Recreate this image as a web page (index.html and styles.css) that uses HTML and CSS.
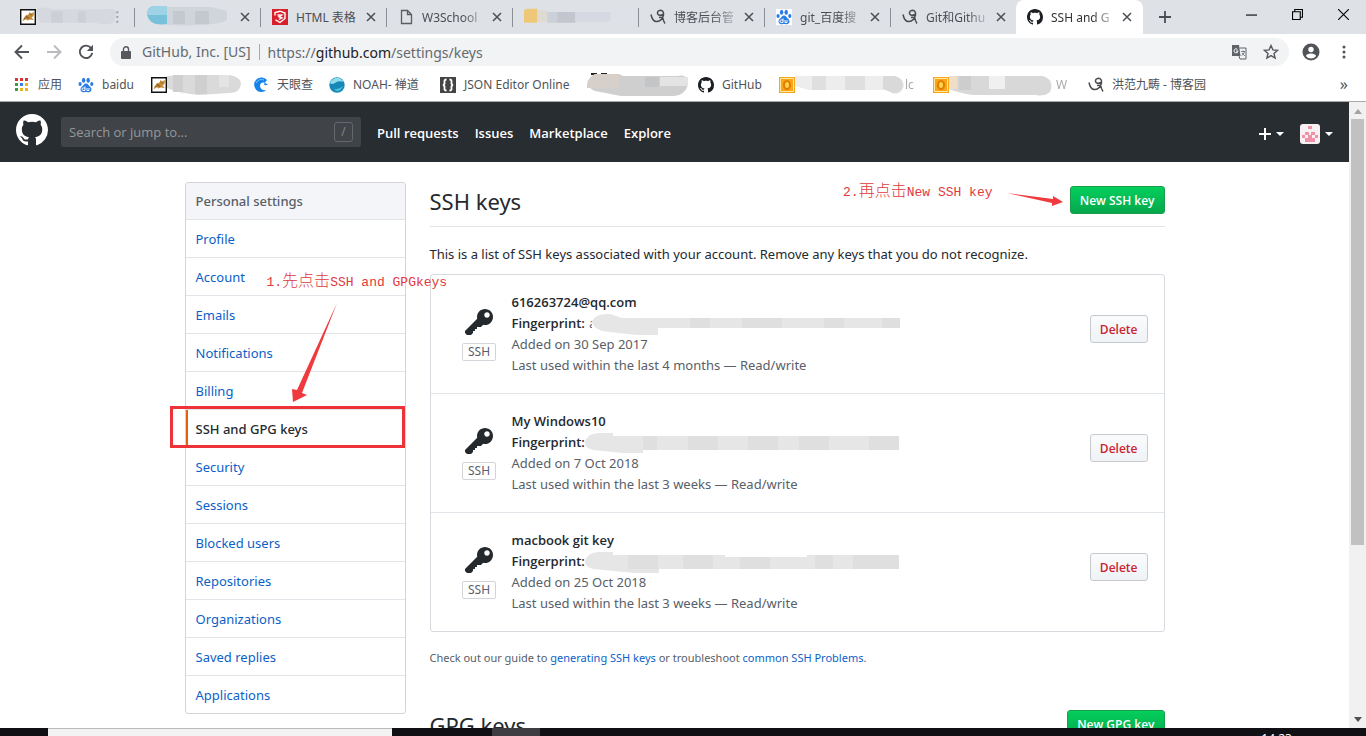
FILE: index.html
```html
<!DOCTYPE html>
<html lang="en">
<head>
<meta charset="utf-8">
<title>SSH and GPG keys</title>
<link rel="stylesheet" href="styles.css">
</head>
<body>
<svg class="sprite" aria-hidden="true">
  <symbol id="octocat" viewBox="0 0 16 16"><path fill="currentColor" d="M8 0C3.58 0 0 3.58 0 8c0 3.54 2.29 6.53 5.47 7.59.4.07.55-.17.55-.38 0-.19-.01-.82-.01-1.49-2.01.37-2.53-.49-2.69-.94-.09-.23-.48-.94-.82-1.13-.28-.15-.68-.52-.01-.53.63-.01 1.08.58 1.23.82.72 1.21 1.87.87 2.33.66.07-.52.28-.87.51-1.07-1.78-.2-3.64-.89-3.64-3.95 0-.87.31-1.59.82-2.15-.08-.2-.36-1.02.08-2.12 0 0 .67-.21 2.2.82.64-.18 1.32-.27 2-.27.68 0 1.36.09 2 .27 1.53-1.04 2.2-.82 2.2-.82.44 1.1.16 1.92.08 2.12.51.56.82 1.27.82 2.15 0 3.07-1.87 3.75-3.65 3.95.29.25.54.73.54 1.48 0 1.07-.01 1.93-.01 2.2 0 .21.15.46.55.38A8.013 8.013 0 0 0 16 8c0-4.42-3.58-8-8-8z"/></symbol>
  <symbol id="key" viewBox="0 0 14 16"><path fill="currentColor" d="M12.83 2.17C12.08 1.42 11.14 1.03 10 1c-1.13.03-2.08.42-2.83 1.17S6.04 3.86 6.01 5c0 .3.03.59.09.89L0 12v1l1 1h2l1-1v-1h1v-1h1v-1h2l1.09-1.11c.3.08.59.11.91.11 1.14-.03 2.08-.42 2.83-1.17S13.97 6.14 14 5c-.03-1.14-.42-2.08-1.17-2.83zM11 5.38c-.77 0-1.38-.61-1.38-1.38 0-.77.61-1.38 1.38-1.38.77 0 1.38.61 1.38 1.38 0 .77-.61 1.38-1.38 1.38z"/></symbol>
  <symbol id="close" viewBox="0 0 10 10"><path d="M1 1l8 8M9 1l-8 8" fill="none" stroke="#4b4e53" stroke-width="1.5"/></symbol>
  <symbol id="paw" viewBox="0 0 16 16"><g fill="#2b7de6"><ellipse cx="5.6" cy="3.2" rx="1.7" ry="2.5"/><ellipse cx="10.2" cy="3.2" rx="1.7" ry="2.5"/><ellipse cx="2.1" cy="7" rx="1.6" ry="2.1"/><ellipse cx="13.8" cy="7" rx="1.6" ry="2.1"/><path d="M8 6.600c-2 0-2.600 2.200-4.400 3.500C1.700 11.700 2.500 15.300 5 15.300c1.200 0 1.800-.3 3-.3s1.800.3 3 .3c2.500 0 3.300-3.600 1.400-5.200C10.600 8.800 10 6.600 8 6.600z"/></g><path d="M7 9.500v4H5.200a1.200 1.200 0 0 1 0-2.500H7M9 11v2.500h2V11" fill="none" stroke="#fff"/></symbol>
  <symbol id="cnblogs" viewBox="0 0 16 16"><path d="M1 5.500Q2.500 13 7 12.500 12 12 13.500 6 14 1.500 10.500 1.200 7.200 1.500 7.500 4.500 8.500 7.500 13 5.500M9 8.500q3-1 4 1 .5 3 2 5" fill="none" stroke="#4c4c50" stroke-width="1.500"/></symbol>
  <symbol id="tomcat" viewBox="0 0 16 16"><path d="M.7.7h14.600v14.600H.7z" fill="#fff" stroke="#111" stroke-width="1.400"/><path d="M2.500 12.500l1-3 2-3 3-1 1-2.500 1.500 1.500 3-1.500-.5 4-2 1.500 2.500 2.500-4-.5-3 1-1-1.500z" fill="#c78a35"/><path d="M4 10l4-2 1 2M10 5l2 1M6 7l2 2" fill="none" stroke="#6b5430" stroke-width=".7"/></symbol>
  <symbol id="obox" viewBox="0 0 16 16"><path d="M0 0h16v16H0z" fill="#f9a51a"/><path d="M1.500 1.500h13v13h-13z" fill="none" stroke="#ffe9a0"/><ellipse cx="8" cy="8" rx="3" ry="4" fill="#ffd34d" stroke="#e07c00" stroke-width="2"/></symbol>
  <symbol id="caret" viewBox="0 0 8 4"><path d="M0 0h8L4 4z" fill="currentColor"/></symbol>
</svg>

<header class="tabs">
  <div class="tab"><svg class="fav"><use href="#tomcat"/></svg>
    <svg class="mosaic-tab" viewBox="0 0 92 24"><path d="M0 4q8-4 18 0h50q14-2 16 3l-2 10q-8 5-20 1H4z" fill="#d5d8de"/><path d="M16 6h12v12H16zM44 6h8v12h-8z" fill="#cdcfd6"/><path d="M84 6h2v2h-2zM84 11h2v2h-2zM84 16h2v2h-2z" fill="#9da0a8"/></svg></div>
  <div class="tab"><svg class="mosaic-tab" viewBox="0 0 86 24"><path d="M0 10Q0 1 8 1h12v18Q3 22 0 10z" fill="#78c1da"/><path d="M0 10h20V1H8Q0 2 0 10z" fill="#9dd3e5"/><path d="M20 2h44l16 4v9q-12 7-60 5z" fill="#d0d4db"/><path d="M26 6h12v13H26zM48 6h14v13H48z" fill="#c4c8d0"/></svg><button class="x" aria-label="Close tab"><svg><use href="#close"/></svg></button></div>
  <div class="tab"><svg class="fav" viewBox="0 0 16 16"><path d="M0 0h16v16H0z" fill="#d8202c"/><path d="M3 6.500V3.500L8 2.200l5 1.800v5.500L8 13.500l-4.500-2.700M5.500 6l4 .2-2.500 1.600 3 1-3 1.700" fill="none" stroke="#fff" stroke-width="1.400"/></svg><span class="title">HTML 表格</span><button class="x" aria-label="Close tab"><svg><use href="#close"/></svg></button></div>
  <div class="tab"><svg class="fav" viewBox="0 0 16 16"><path d="M3.500 1.500h6l4 4v9h-10zM9.500 1.500v4h4" fill="none" stroke="#5a5d61" stroke-width="1.300"/></svg><span class="title fade">W3School</span><button class="x" aria-label="Close tab"><svg><use href="#close"/></svg></button></div>
  <div class="tab"><svg class="mosaic-tab" viewBox="0 0 106 24"><path d="M0 6Q0 2 4 2h12v17H0z" fill="#efc778"/><path d="M16 4h12v14H16z" fill="#dfdbd2"/><path d="M28 6h12v13H28z" fill="#ccd0d8"/><path d="M40 6h22v13H40z" fill="#c3c6cf"/><path d="M62 6h42v10q-6 4-14 2H62z" fill="#d6d9e1"/></svg></div>
  <div class="tab"><svg class="fav"><use href="#cnblogs"/></svg><span class="title fade">博客后台管</span><button class="x" aria-label="Close tab"><svg><use href="#close"/></svg></button></div>
  <div class="tab"><svg class="fav white"><use href="#paw"/></svg><span class="title fade">git_百度搜</span><button class="x" aria-label="Close tab"><svg><use href="#close"/></svg></button></div>
  <div class="tab last"><svg class="fav"><use href="#cnblogs"/></svg><span class="title fade">Git和Githu</span><button class="x" aria-label="Close tab"><svg><use href="#close"/></svg></button></div>
  <div class="tab active"><svg class="fav dark"><use href="#octocat"/></svg><span class="title fade">SSH and G</span><button class="x" aria-label="Close tab"><svg><use href="#close"/></svg></button></div>
  <button class="newtab" aria-label="New tab"><svg viewBox="0 0 12 12"><path d="M6 0v12M0 6h12" stroke="#4b4e53" stroke-width="1.800"/></svg></button>
  <div class="window-buttons">
    <button aria-label="Minimize"><svg viewBox="0 0 10 10"><path d="M0 5.500h10" stroke="#000"/></svg></button>
    <button aria-label="Restore"><svg viewBox="0 0 10 10"><path d="M.5 2.500h7v7h-7zM2.500 2.500v-2h7v7h-2" fill="none" stroke="#000"/></svg></button>
    <button aria-label="Close"><svg viewBox="0 0 10 10"><path d="M0 0l10 10M10 0L0 10" stroke="#000"/></svg></button>
  </div>
</header>

<div class="toolbar">
  <button aria-label="Back"><svg viewBox="0 0 16 16"><path d="M15 8H2M8 1.500L1.500 8 8 14.500" fill="none" stroke="#505357" stroke-width="1.900"/></svg></button>
  <button aria-label="Forward"><svg viewBox="0 0 16 16"><path d="M1 8h13M8 1.500L14.500 8 8 14.500" fill="none" stroke="#b9bbbe" stroke-width="1.900"/></svg></button>
  <button aria-label="Reload"><svg viewBox="0 0 16 16"><path d="M13.300 4.500A6.200 6.200 0 1 0 14.200 8.800" fill="none" stroke="#505357" stroke-width="1.900"/><path d="M15 .8v6.200H8.800z" fill="#505357"/></svg></button>
  <div class="omnibox">
    <svg class="lock" viewBox="0 0 10 13"><path d="M1 5h8q1 0 1 1v6q0 1-1 1H1q-1 0-1-1V6q0-1 1-1z" fill="#55585c"/><path d="M2.500 5V3.300a2.500 2.500 0 0 1 5 0V5" fill="none" stroke="#55585c" stroke-width="1.400"/></svg>
    <span class="owner">GitHub, Inc. [US]</span>
    <span class="url">https://<b>github.com</b>/settings/keys</span>
    <button aria-label="Translate"><svg viewBox="0 0 16 16"><path d="M1 1h7l1.500 11H1z" fill="#5f6368"/><path d="M8.500 4H15v11H9l-1-3" fill="none" stroke="#5f6368"/><path d="M6.500 5.500A2 2 0 1 0 7 7H5" fill="none" stroke="#fff"/><path d="M10 7.500h4M12 6.500v1M13.500 7.500q-.5 3-3 4M11 9l3 3" fill="none" stroke="#5f6368" stroke-width=".8"/></svg></button>
    <button aria-label="Bookmark this page"><svg viewBox="0 0 16 16"><path d="M8 1.500l1.900 4.400 4.700.4-3.600 3.100 1.100 4.700L8 11.600l-4.100 2.500L5 9.400 1.400 6.300l4.700-.4z" fill="none" stroke="#55585c" stroke-width="1.400"/></svg></button>
  </div>
  <button class="profile" aria-label="Profile"><svg viewBox="0 0 18 18"><circle cx="9" cy="9" r="8.500" fill="#505357"/><circle cx="9" cy="6.500" r="2.700" fill="#fff"/><path d="M3.800 13q1-2.500 5.200-2.500t5.200 2.500Q12 15.500 9 15.500T3.800 13z" fill="#fff"/></svg></button>
  <button class="menu" aria-label="Menu"><svg viewBox="0 0 16 16"><g fill="#505357"><circle cx="8" cy="3" r="1.500"/><circle cx="8" cy="8" r="1.500"/><circle cx="8" cy="13" r="1.500"/></g></svg></button>
</div>

<nav class="bookmarks" aria-label="Bookmarks">
  <a href="#"><svg viewBox="0 0 16 16"><path d="M1 1h3v3H1zM6 1h3v3H6zM11 1h3v3h-3z" fill="#db3236"/><path d="M1 6h3v3H1z" fill="#3c9a48"/><path d="M6 6h3v3H6z" fill="#3b7ded"/><path d="M11 6h3v3h-3zM6 11h3v3H6zM11 11h3v3h-3z" fill="#e9b520"/><path d="M1 11h3v3H1z" fill="#3c9a48"/></svg>应用</a>
  <a href="#"><svg><use href="#paw"/></svg>baidu</a>
  <a href="#" class="masked" aria-label="Bookmark"><svg><use href="#tomcat"/></svg><svg class="mosaic-s" viewBox="0 0 74 22"><path d="M0 2l12-1h50q12 2 12 9-1 9-12 9l-30 2Q10 19 0 14z" fill="#dadada"/><path d="M6 1h10v17H6zM28 1h12v19H28z" fill="#cfcfcf"/><path d="M52 1h10v12H52z" fill="#e4e4e4"/></svg></a>
  <a href="#"><svg viewBox="0 0 16 16"><path d="M14 3A7.300 7.300 0 1 0 13.500 13Q8 14 7 9.500 7 5 11 5.500l4 2Q11 9 11 7" fill="#1683ea"/><path d="M3 6q3-5 8-3" fill="none" stroke="#7cc3fb"/></svg>天眼查</a>
  <a href="#"><svg viewBox="0 0 16 16"><circle cx="8" cy="8" r="7.700" fill="#1788b5"/><path d="M.8 6Q3 1 8 .8q5 .2 6.500 4.200Q9 3 6 6 3 8 .8 6z" fill="#8fdcec"/><path d="M5 12q5 1 9-3-2 5-6 5-2 0-3-2z" fill="#4fc3dc"/></svg>NOAH- 禅道</a>
  <a href="#"><svg viewBox="0 0 16 16"><path d="M0 0h16v16H0z" fill="#444"/><path d="M6.500 2.500Q4 2.500 4.500 5T3 8q2 .5 1.500 3t2 2.500M9.500 2.500Q12 2.500 11.500 5T13 8q-2 .5-1.500 3t-2 2.500" fill="none" stroke="#fff" stroke-width="1.800"/></svg>JSON Editor Online</a>
  <a href="#" class="masked" aria-label="Bookmark"><svg class="mosaic-l" viewBox="0 0 102 24"><path d="M4 0h6v2H4zM14 0h6v2h-6z" fill="#222"/><path d="M8 1h24l4 2h54q12-3 11 9-4 11-14 11H34Q14 19 8 18-6 12 8 1z" fill="#cfcfcf"/><path d="M8 1h24v14H0Q-1 5 8 1z" fill="#d7d0ca"/><path d="M58 4h14v10H58z" fill="#c4c5c6"/><path d="M73 4h28v9H73z" fill="#e4e4e4"/></svg></a>
  <a href="#"><svg class="dark"><use href="#octocat"/></svg>GitHub</a>
  <a href="#" class="masked"><svg><use href="#obox"/></svg><svg class="mosaic-m" viewBox="0 0 110 22"><path d="M0 2h96q12 0 13 10-2 8-10 8l-8-4H14L0 12z" fill="#ededed"/><path d="M17 2h14v14H17zM50 2h20v14H50z" fill="#dfdfdf"/><path d="M88 2h12q8 2 8 10-2 8-10 7l-10-4z" fill="#d9d9d9"/></svg><span class="faded">lc</span></a>
  <a href="#" class="masked"><svg><use href="#obox"/></svg><svg class="mosaic-m narrow" viewBox="0 0 104 24"><path d="M0 3h94q12 4 7 16-6 5-14 3H24Q10 20 0 16z" fill="#d8d8d8"/><path d="M0 3h8v13H0z" fill="#efdfc8"/><path d="M40 3h16v13H40z" fill="#f0f0f0"/><path d="M10 3h12v14H10z" fill="#cdcdcd"/></svg><span class="faded">W</span></a>
  <a href="#"><svg><use href="#cnblogs"/></svg>洪范九畴 - 博客园</a>
  <button class="more" aria-label="More bookmarks">»</button>
</nav>

<div class="viewport">
  <div class="page">
    <header class="gh-header">
      <a href="#" class="gh-logo" aria-label="GitHub"><svg><use href="#octocat"/></svg></a>
      <div class="search"><input type="text" aria-label="Search GitHub" placeholder="Search or jump to..."><kbd>/</kbd></div>
      <nav class="gh-nav"><a href="#">Pull requests</a><a href="#">Issues</a><a href="#">Marketplace</a><a href="#">Explore</a></nav>
      <div class="gh-user">
        <button aria-label="Create new"><svg class="plus" viewBox="0 0 12 12"><path d="M6 0v12M0 6h12" stroke="currentColor" stroke-width="2"/></svg><svg class="caret"><use href="#caret"/></svg></button>
        <button aria-label="Account"><svg class="avatar" viewBox="0 0 20 20"><rect width="20" height="20" rx="3" fill="#f8f0f2"/><path d="M8 2h4v3H8zM5 8h4v3H5zM11 8h4v3h-4zM2 11h3v3H2zM15 11h3v3h-3zM8 11h4v3H8zM5 14h10v4H5z" fill="#ee93a7"/></svg><svg class="caret"><use href="#caret"/></svg></button>
      </div>
    </header>

    <div class="container">
      <aside class="side">
        <nav class="side-menu" aria-label="Personal settings">
          <h3>Personal settings</h3>
          <a href="#">Profile</a><a href="#">Account</a><a href="#">Emails</a><a href="#">Notifications</a><a href="#">Billing</a>
          <a href="#" class="selected" aria-current="page">SSH and GPG keys</a>
          <a href="#">Security</a><a href="#">Sessions</a><a href="#">Blocked users</a><a href="#">Repositories</a><a href="#">Organizations</a><a href="#">Saved replies</a><a href="#">Applications</a>
        </nav>
        <p class="note note-one">1.<span>先点击</span>SSH and GPGkeys</p>
        <svg class="arrow arrow-one" viewBox="0 0 56 102"><path d="M53 1L18 91l5 2L9 100 8 87l5 1z" fill="#f03a3e"/></svg>
      </aside>

      <main class="main">
        <div class="subhead"><h2>SSH keys</h2><button class="btn primary">New SSH key</button>
          <p class="note note-two">2.<span>再点击</span>New SSH key</p>
          <svg class="arrow arrow-two" viewBox="0 0 56 16"><path d="M0 1l46 6V4l10 6-11 4v-3z" fill="#f03a3e"/></svg>
        </div>
        <p class="intro">This is a list of SSH keys associated with your account. Remove any keys that you do not recognize.</p>
        <ul class="keys">
          <li>
            <div class="kind"><svg><use href="#key"/></svg><span>SSH</span></div>
            <div class="info"><strong>616263724@qq.com</strong>
              <div class="fp short"><strong>Fingerprint:</strong> <span class="peek">a</span><svg viewBox="0 0 308 22" preserveAspectRatio="none"><path d="M0 8Q4 0 18 1l12 4h278v10H66v7H44L10 18Q0 14 0 8z" fill="#e6e6e6"/><path d="M98 5h20v10H98zM150 5h40v10h-40zM232 5h20v10h-20zM290 5h18v10h-18z" fill="#dfdfdf"/></svg></div>
              <p>Added on 30 Sep 2017</p><p>Last used within the last 4 months — Read/write</p></div>
            <button class="btn danger">Delete</button>
          </li>
          <li>
            <div class="kind"><svg><use href="#key"/></svg><span>SSH</span></div>
            <div class="info"><strong>My Windows10</strong>
              <div class="fp"><strong>Fingerprint:</strong><svg viewBox="0 0 314 22" preserveAspectRatio="none"><path d="M0 11Q2 1 14 1h14v3h286v14H58v3H38L8 18Q0 16 0 11z" fill="#e6e6e6"/><path d="M58 4h14v14H58zM103 4h30v14h-30zM163 4h30v14h-30zM214 4h30v14h-30zM284 4h30v14h-30z" fill="#dfdfdf"/></svg></div>
              <p>Added on 7 Oct 2018</p><p>Last used within the last 3 weeks — Read/write</p></div>
            <button class="btn danger">Delete</button>
          </li>
          <li>
            <div class="kind"><svg><use href="#key"/></svg><span>SSH</span></div>
            <div class="info"><strong>macbook git key</strong>
              <div class="fp"><strong>Fingerprint:</strong><svg viewBox="0 0 314 22" preserveAspectRatio="none"><path d="M0 11Q2 1 14 1h14v3h112v2h82V4h92v14H74v4H50L8 18Q0 16 0 11z" fill="#e6e6e6"/><path d="M43 4h30v14H43zM98 4h30v14H98zM155 6h30v12h-30zM230 4h18v14h-18zM268 4h46v14h-46z" fill="#dfdfdf"/></svg></div>
              <p>Added on 25 Oct 2018</p><p>Last used within the last 3 weeks — Read/write</p></div>
            <button class="btn danger">Delete</button>
          </li>
        </ul>
        <p class="help">Check out our guide to <a href="#">generating SSH keys</a> or troubleshoot <a href="#">common SSH Problems</a>.</p>
        <div class="subhead"><h2>GPG keys</h2><button class="btn primary">New GPG key</button></div>
      </main>
    </div>
  </div>
  <div class="scrollbar" aria-hidden="true"><svg viewBox="0 0 8 5"><path d="M0 5h8L4 0z" fill="#a3a3a3"/></svg><div class="thumb"></div><div class="track"></div><svg viewBox="0 0 8 5"><path d="M0 0h8L4 5z" fill="#505050"/></svg></div>
</div>

<footer class="taskbar"><div class="task-search"></div><div class="task-active"></div><time>14:23</time></footer>
</body>
</html>
```

FILE: styles.css
```css
*, *::before, *::after { box-sizing: border-box; }
body {
  margin: 0;
  height: 100vh;
  display: flex;
  flex-direction: column;
  overflow: hidden;
  background: #fff;
  color: #24292e;
  font: 13px/21px "Noto Sans", "Noto Sans CJK SC", sans-serif;
}
button { font: inherit; border: 0; background: none; padding: 0; }
a { color: #0b5fc8; text-decoration: none; }
p, h2, h3, ul { margin: 0; padding: 0; }
svg { display: block; flex: none; }
.sprite { position: absolute; width: 0; height: 0; }
.dark { color: #1b1f23; }

/* tab strip */
.tabs { flex: none; height: 34px; display: flex; background: #dee1e6; padding-left: 9px; }
.tab { flex: 0 1 126px; min-width: 0; display: flex; align-items: center; padding: 0 11px; position: relative; color: #4b4e53; }
.tab::after { content: ""; position: absolute; right: 0; top: 8px; width: 1px; height: 19px; background: #8b8e94; }
.tab.last::after, .tab.active::after { display: none; }
.tab.active { background: #fff; border-radius: 8px 8px 0 0; flex-basis: 127px; margin-left: -1px; color: #333; }
.fav { width: 16px; height: 16px; }
.white { background: #fff; }
.title { flex: 1; min-width: 0; margin: 0 2px 0 8px; font-size: 12px; white-space: nowrap; overflow: hidden; }
.fade { mask-image: linear-gradient(to right, #000 60%, transparent 98%); }
.tab .x { width: 10px; height: 10px; margin-left: auto; }
.x svg { width: 10px; height: 10px; }
.mosaic-tab { width: 88px; height: 24px; flex: 0 1 auto; min-width: 0; }
.newtab { width: 44px; display: grid; place-items: center; }
.newtab svg { width: 12px; height: 12px; }
.window-buttons { margin-left: auto; display: flex; height: 28px; }
.window-buttons button { width: 46px; display: grid; place-items: center; }
.window-buttons svg { width: 11px; height: 11px; }

/* address bar */
.toolbar { flex: none; height: 36px; display: flex; align-items: center; padding: 0 14px; gap: 16px; }
.toolbar button svg { width: 16px; height: 16px; }
.omnibox { flex: 1; height: 28px; margin-right: -3px; border-radius: 14px; background: #f1f3f4; display: flex; align-items: center; gap: 16px; padding: 0 10px 0 11px; font-size: 14px; color: #666a6f; }
.lock { width: 10px; height: 13px; margin-right: -5px; }
.owner { border-right: 1px solid #a5a8ac; line-height: 16px; padding-right: 8px; margin-right: -8px; }
.url { flex: 1; }
.url b { font-weight: 400; color: #202124; }
.toolbar .profile svg { width: 18px; height: 18px; }

/* bookmarks */
.bookmarks { flex: none; height: 32px; border-bottom: 1px solid #a9abad; display: grid; grid-template-columns: 64px 73px 102px 76px 111px 147px 111px 81px 154px 155px 1fr auto; padding: 0 18px 2px 14px; font-size: 12px; }
.bookmarks a { display: flex; align-items: center; gap: 8px; color: #505357; white-space: nowrap; min-width: 0; }
.bookmarks svg { width: 16px; height: 16px; }
.bookmarks .masked { gap: 0; }
.bookmarks .mosaic-s { width: 74px; height: 22px; }
.bookmarks .mosaic-l { width: 102px; height: 24px; }
.bookmarks .mosaic-m { width: 110px; height: 22px; }
.bookmarks .narrow { width: 104px; height: 24px; margin-right: 3px; }
.faded { opacity: .5; }
.more { font-size: 16px; color: #505357; }

/* page viewport */
.viewport { flex: 1; min-height: 0; display: flex; }
.page { flex: 1; min-width: 0; overflow: hidden; }
.scrollbar { flex: none; width: 17px; background: #f1f1f1; display: flex; flex-direction: column; align-items: center; padding: 7px 0 6px; }
.scrollbar svg { width: 8px; height: 5px; }
.thumb { flex: 425; width: 13px; margin-top: 5px; background: #c1c1c1; }
.track { flex: 171; }

.gh-header { height: 60px; background: #282d31; color: #fff; display: flex; align-items: center; padding: 0 16px; }
.gh-logo { color: #fff; margin: -4px 13px 0 0; }
.gh-logo svg { width: 32px; height: 32px; }
.search { flex: 0 1 300px; height: 30px; background: #404448; border-radius: 3px; display: flex; align-items: center; padding: 0 8px; }
.search input { flex: 1; min-width: 0; border: 0; outline: 0; padding: 0; background: none; color: #fff; font: 13px/21px "Open Sans", sans-serif; }
.search input::placeholder { color: #96989a; opacity: 1; }
.search kbd { width: 19px; height: 20px; border: 1px solid #65696d; border-radius: 3px; color: #85888b; font: 12px/18px "Open Sans", sans-serif; text-align: center; }
.gh-nav { display: flex; gap: 16px; margin-left: 16px; padding-top: 2px; }
.gh-nav a { color: #fff; font-family: "Open Sans", sans-serif; font-weight: 600; }
.gh-user { margin-left: auto; padding-top: 4px; display: flex; gap: 16px; }
.gh-user button { display: flex; align-items: center; color: #fff; gap: 5px; }
.plus { width: 12px; height: 12px; }
.avatar { width: 20px; height: 20px; }
.caret { width: 8px; height: 4px; }

.container { max-width: 980px; margin: 20px auto 0; display: flex; gap: 24px; }
.side { flex: 0 0 221px; position: relative; }
.side-menu { border: 1px solid #d1d5da; border-radius: 3px; overflow: hidden; }
.side-menu h3 { background: #f3f5f8; color: #586069; font-size: 13px; font-weight: 500; line-height: 21px; padding: 8px 10px 7px; border-bottom: 1px solid #e1e4e8; }
.side-menu a { display: block; padding: 9px 10px 7px; border-bottom: 1px solid #e1e4e8; }
.side-menu a:last-child { border-bottom: 0; }
.side-menu .selected { color: #24292e; font-weight: 500; box-shadow: inset 2px 0 #e36209; }
.side::after { content: ""; position: absolute; left: -15px; top: 224px; width: 235px; height: 42px; border: 3px solid #ee3338; }

.note { position: absolute; color: #e0393c; font: 13px/20px "Liberation Mono", "Noto Sans CJK SC", monospace; white-space: nowrap; }
.note span { font-size: 16px; font-weight: 300; }
.note-one { left: 82px; top: 90px; z-index: 1; }
.arrow { position: absolute; }
.arrow-one { left: 99px; top: 120px; width: 56px; height: 102px; }
.note-two { right: 172px; top: 0; }
.arrow-two { right: 102px; top: 10px; width: 56px; height: 16px; }

.main { flex: 1; min-width: 0; }
.subhead { position: relative; display: flex; justify-content: space-between; align-items: flex-start; border-bottom: 1px solid #e1e4e8; padding-bottom: 6px; }
.subhead h2 { font-size: 22px; font-weight: 400; line-height: 38px; }
.btn { height: 28px; border-radius: 3px; font-family: "Open Sans", sans-serif; font-size: 12px; font-weight: 600; line-height: 18px; padding: 1px 9px 0; border: 1px solid #c6cace; }
.primary { margin-top: 4px; color: #fff; border-color: #1a9d4b; background: linear-gradient(#04cf5c, #05a84c); }
.danger { align-self: flex-start; margin-top: 23px; color: #cb2431; background: linear-gradient(#fafbfc, #eff3f6); }
.intro { margin: 17px 0 9px; }
.keys { list-style: none; border: 1px solid #d6dade; border-radius: 3px; }
.keys li { display: flex; align-items: center; padding: 17px 16px; border-top: 1px solid #e1e4e8; }
.keys li:first-child { border-top: 0; }
.kind { width: 65px; display: flex; flex-direction: column; align-items: center; gap: 4px; }
.kind svg { width: 28px; height: 32px; }
.kind span { border: 1px solid #d1d5da; border-radius: 2px; font-size: 12px; line-height: 16px; padding: 0 5px; color: #586069; }
.info { flex: 1; min-width: 0; color: #586069; }
.info strong { font-family: "Open Sans", sans-serif; font-weight: 600; color: #24292e; }
.info > strong { display: block; }
.fp { display: flex; height: 21px; }
.fp svg { flex: 0 1 314px; height: 22px; }
.fp.short svg { flex-basis: 308px; }
.peek { width: 3px; overflow: hidden; margin-left: 4px; }
.help { font-size: 11px; line-height: 18px; color: #586069; margin: 17px 0 39px; }

.taskbar { flex: none; height: 8px; background: #101014; display: flex; overflow: hidden; padding: 0 74px 0 48px; }
.task-search { width: 344px; background: #f3f3f3; border-top: 1px solid #bbb; }
.task-active { width: 48px; margin-left: 100px; background: #3d3d42; }
.taskbar time { margin-left: auto; margin-top: 4px; color: #fff; font-size: 12px; line-height: 14px; }
```
